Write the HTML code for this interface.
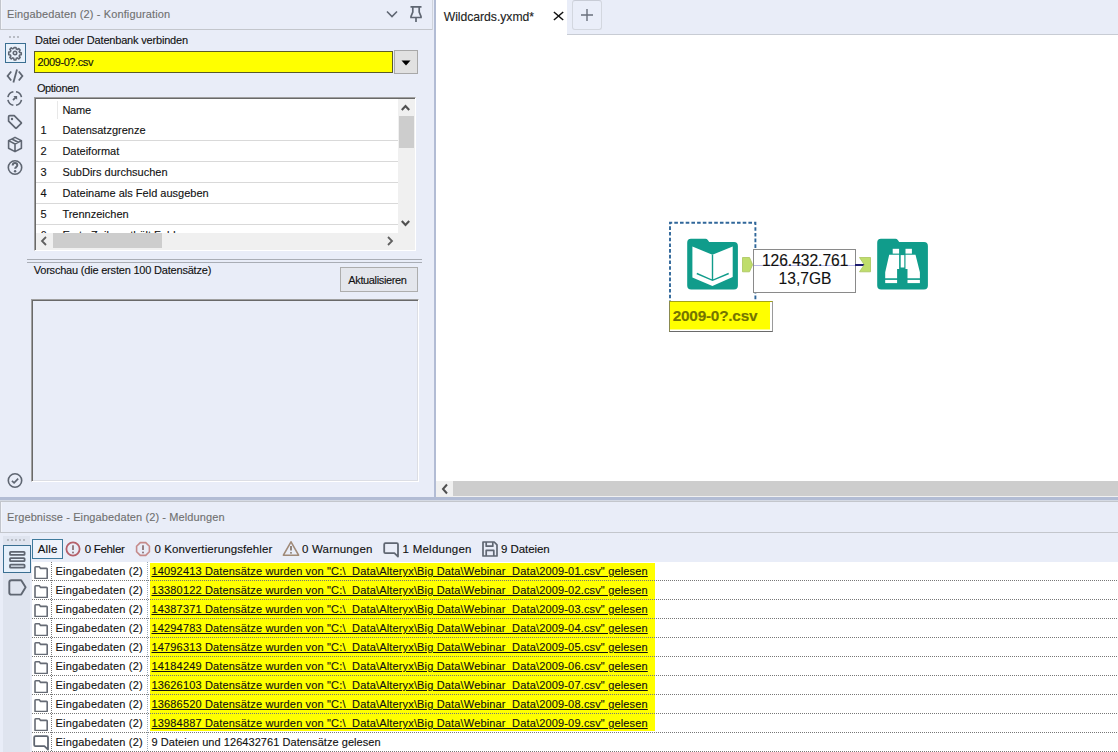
<!DOCTYPE html>
<html><head><meta charset="utf-8">
<style>
*{margin:0;padding:0;box-sizing:border-box}
html,body{width:1118px;height:752px;overflow:hidden;background:#e9edf8;font-family:"Liberation Sans",sans-serif;position:relative}
.a{position:absolute}
.t{position:absolute;white-space:pre;line-height:1;-webkit-text-stroke:0.12px currentColor}
</style></head><body>
<div class="a" style="left:0px;top:0px;width:434px;height:497px;background:#e9edf8;"></div>
<div class="a" style="left:0px;top:0px;width:1px;height:29px;background:#c2c5cc;"></div>
<div class="a" style="left:1px;top:0px;width:1px;height:29px;background:#f2f4fa;"></div>
<div class="a" style="left:0px;top:29px;width:433px;height:1px;background:#c3c6cc;"></div>
<div class="a" style="left:432px;top:0px;width:1px;height:30px;background:#d0d4dc;"></div>
<div class="t" style="left:7.00px;top:9.19px;font-size:11px;color:#707070;letter-spacing:0.133px;">Eingabedaten&#32;(2)&#32;-&#32;Konfiguration</div>
<svg class="a" style="left:385px;top:9px" width="14" height="10" viewBox="0 0 14 10"><path d="M2 2.5 L7 7.5 L12 2.5" fill="none" stroke="#5f6672" stroke-width="1.6"/></svg>
<svg class="a" style="left:408px;top:4px" width="16" height="20" viewBox="0 0 16 20"><path d="M2.5 2.8 H13.5 M4.8 3 V8 L3 12.5 V13.5 H13 V12.5 L11.2 8 V3 M8 13.5 V18" fill="none" stroke="#5f6672" stroke-width="1.7"/></svg>
<div class="a" style="left:9px;top:36px;width:2px;height:2px;background:#b8bcc4;"></div>
<div class="a" style="left:13px;top:36px;width:2px;height:2px;background:#b8bcc4;"></div>
<div class="a" style="left:17px;top:36px;width:2px;height:2px;background:#b8bcc4;"></div>
<div class="a" style="left:5px;top:43px;width:21px;height:20px;border:1.3px solid #3a6f92;background:#e8f1fb"></div>
<svg class="a" style="left:7px;top:45px" width="16" height="16" viewBox="0 0 16 16"><g fill="none" stroke="#5f6672" stroke-width="1.8" stroke-linejoin="round" transform="translate(8 8) scale(0.87) translate(-8 -8)"><path d="M6.9 1.6h2.2l.4 1.9 1.2.5 1.6-1.1 1.6 1.6-1.1 1.6.5 1.2 1.9.4v2.2l-1.9.4-.5 1.2 1.1 1.6-1.6 1.6-1.6-1.1-1.2.5-.4 1.9H6.9l-.4-1.9-1.2-.5-1.6 1.1-1.6-1.6 1.1-1.6-.5-1.2-1.9-.4V6.9l1.9-.4.5-1.2-1.1-1.6 1.6-1.6 1.6 1.1 1.2-.5z"/><circle cx="8" cy="8" r="2"/></g></svg>
<svg class="a" style="left:6px;top:68px" width="18" height="16" viewBox="0 0 18 16"><g fill="none" stroke="#5f6672" stroke-width="1.8"><path d="M5.2 3.5 L1.6 8 L5.2 12.5 M12.8 3.5 L16.4 8 L12.8 12.5 M11 1.5 L7.4 14.5"/></g></svg>
<svg class="a" style="left:7px;top:91px" width="16" height="16" viewBox="0 0 16 16"><g fill="none" stroke="#5f6672" stroke-width="1.6"><path d="M14.47 8.82 A6.9 6.9 0 0 1 9.02 14.27 M6.38 14.27 A6.9 6.9 0 0 1 0.93 8.82 M0.93 6.18 A6.9 6.9 0 0 1 6.38 0.73 M9.02 0.73 A6.9 6.9 0 0 1 14.47 6.18"/><path d="M6 9.1 L9.2 5.9" stroke-width="1.8"/></g><path d="M6.4 5 H10.1 V8.7 Z" fill="#5f6672"/></svg>
<svg class="a" style="left:7px;top:114px" width="16" height="16" viewBox="0 0 16 16"><g fill="none" stroke="#5f6672" stroke-width="1.7" stroke-linejoin="round"><path d="M2.8 1.6 H7.2 L14.2 8.6 Q14.6 9 14.2 9.4 L9.4 14.2 Q9 14.6 8.6 14.2 L1.6 7.2 V2.8 Q1.6 1.6 2.8 1.6 Z"/></g><circle cx="5" cy="5" r="1.2" fill="#5f6672"/></svg>
<svg class="a" style="left:7px;top:136px" width="16" height="17" viewBox="0 0 16 17"><g fill="none" stroke="#5f6672" stroke-width="1.6" stroke-linejoin="round"><path d="M8 1.4 L14.4 4.6 V12.2 L8 15.6 L1.6 12.2 V4.6 Z M1.6 4.6 L8 8 L14.4 4.6 M8 8 V15.6 M4.8 3 L11.2 6.3"/></g></svg>
<svg class="a" style="left:7px;top:159px" width="16" height="17" viewBox="0 0 16 17"><g fill="none" stroke="#5f6672" stroke-width="1.6"><circle cx="8" cy="8.5" r="6.7"/><path d="M5.7 6.5 C5.7 4.8 6.8 4.1 8 4.1 C9.3 4.1 10.3 4.9 10.3 6.2 C10.3 7.8 8.1 8 8.1 9.8" stroke-width="2"/></g><circle cx="8.1" cy="12.3" r="1.2" fill="#5f6672"/></svg>
<svg class="a" style="left:7px;top:472px" width="16" height="17" viewBox="0 0 16 17"><g fill="none" stroke="#5f6672" stroke-width="1.6"><circle cx="8" cy="8.5" r="6.7"/><path d="M4.9 8.8 L7.1 10.9 L11.2 6.6"/></g></svg>
<div class="t" style="left:35.00px;top:35.19px;font-size:11px;color:#111;letter-spacing:-0.182px;">Datei&#32;oder&#32;Datenbank&#32;verbinden</div>
<div class="a" style="left:34px;top:51px;width:359px;height:22px;background:#ffff00;border:1px solid #5a5a28"></div>
<div class="t" style="left:37.60px;top:56.59px;font-size:11px;color:#111;letter-spacing:-0.413px;">2009-0?.csv</div>
<div class="a" style="left:394px;top:50px;width:24px;height:24px;background:#e1e1e1;border:1px solid #a8a8a8"></div>
<svg class="a" style="left:400px;top:59px" width="12" height="8" viewBox="0 0 12 8"><path d="M1.5 1.5 H10.5 L6 6.5 Z" fill="#000"/></svg>
<div class="t" style="left:36.90px;top:83.19px;font-size:11px;color:#111;letter-spacing:-0.361px;">Optionen</div>
<div class="a" style="left:34px;top:97px;width:382px;height:154px;background:#fff;border-top:1px solid #a0a0a0;border-left:1px solid #a0a0a0;border-right:1px solid #fff;border-bottom:1px solid #fff;box-shadow:inset 1px 1px 0 #696969,inset -1px -1px 0 #e3e3e3"></div>
<div class="a" style="left:57px;top:101px;width:1px;height:18px;background:#e8e8e8;"></div>
<div class="t" style="left:62.40px;top:105.39px;font-size:11px;color:#111;letter-spacing:-0.242px;">Name</div>
<div class="t" style="left:40.60px;top:125.29px;font-size:11px;color:#111;">1</div>
<div class="t" style="left:62.40px;top:125.29px;font-size:11px;color:#111;">Datensatzgrenze</div>
<div class="a" style="left:36px;top:140px;width:362px;height:1px;background:#d9d9d9;"></div>
<div class="t" style="left:40.60px;top:146.29px;font-size:11px;color:#111;">2</div>
<div class="t" style="left:62.40px;top:146.29px;font-size:11px;color:#111;">Dateiformat</div>
<div class="a" style="left:36px;top:161px;width:362px;height:1px;background:#d9d9d9;"></div>
<div class="t" style="left:40.60px;top:167.29px;font-size:11px;color:#111;">3</div>
<div class="t" style="left:62.40px;top:167.29px;font-size:11px;color:#111;">SubDirs&#32;durchsuchen</div>
<div class="a" style="left:36px;top:182px;width:362px;height:1px;background:#d9d9d9;"></div>
<div class="t" style="left:40.60px;top:188.29px;font-size:11px;color:#111;">4</div>
<div class="t" style="left:62.40px;top:188.29px;font-size:11px;color:#111;letter-spacing:0.007px;">Dateiname&#32;als&#32;Feld&#32;ausgeben</div>
<div class="a" style="left:36px;top:203px;width:362px;height:1px;background:#d9d9d9;"></div>
<div class="t" style="left:40.60px;top:209.29px;font-size:11px;color:#111;">5</div>
<div class="t" style="left:62.40px;top:209.29px;font-size:11px;color:#111;">Trennzeichen</div>
<div class="a" style="left:36px;top:224px;width:362px;height:1px;background:#d9d9d9;"></div>
<div class="a" style="left:36px;top:225px;width:362px;height:8px;overflow:hidden">
<div class="t" style="left:4.60px;top:5.29px;font-size:11px;color:#111;">6</div>
<div class="t" style="left:26.40px;top:5.29px;font-size:11px;color:#111;">Erste&#32;Zeile&#32;enthält&#32;Feldnamen</div>
</div>
<div class="a" style="left:398px;top:99px;width:17px;height:151px;background:#f0f0f0;"></div>
<div class="a" style="left:399px;top:116px;width:15px;height:32px;background:#cdcdcd;"></div>
<svg class="a" style="left:400px;top:103px" width="11" height="9" viewBox="0 0 11 9"><path d="M1.8 7 L5.5 3 L9.2 7" fill="none" stroke="#505050" stroke-width="2.1"/></svg>
<svg class="a" style="left:400px;top:219px" width="11" height="9" viewBox="0 0 11 9"><path d="M1.8 2 L5.5 6 L9.2 2" fill="none" stroke="#505050" stroke-width="2.1"/></svg>
<div class="a" style="left:36px;top:233px;width:362px;height:17px;background:#f0f0f0;"></div>
<div class="a" style="left:53px;top:233px;width:109px;height:15px;background:#cdcdcd;"></div>
<svg class="a" style="left:40px;top:236px" width="8" height="10" viewBox="0 0 8 10"><path d="M6 1 L2 5 L6 9" fill="none" stroke="#606060" stroke-width="1.8"/></svg>
<svg class="a" style="left:386px;top:236px" width="8" height="10" viewBox="0 0 8 10"><path d="M2 1 L6 5 L2 9" fill="none" stroke="#606060" stroke-width="1.8"/></svg>
<div class="a" style="left:27px;top:259px;width:395px;height:1px;background:#a9adb5;"></div>
<div class="a" style="left:27px;top:262px;width:395px;height:1px;background:#a9adb5;"></div>
<div class="t" style="left:33.70px;top:264.99px;font-size:11px;color:#111;letter-spacing:-0.200px;">Vorschau&#32;(die&#32;ersten&#32;100&#32;Datensätze)</div>
<div class="a" style="left:340px;top:267px;width:78px;height:25px;background:#e4e6ec;border:1px solid #adadad"></div>
<div class="t" style="left:348.30px;top:275.29px;font-size:11px;color:#111;letter-spacing:-0.363px;">Aktualisieren</div>
<div class="a" style="left:31px;top:299px;width:388px;height:183px;background:#e9edf8;border-top:1px solid #a0a0a0;border-left:1px solid #a0a0a0;border-right:1px solid #fff;border-bottom:1px solid #fff;box-shadow:inset 1px 1px 0 #696969,inset -1px -1px 0 #dcdee4"></div>
<div class="a" style="left:434px;top:0px;width:2px;height:497px;background:#b2bcd4;"></div>
<div class="a" style="left:436px;top:0px;width:682px;height:481px;background:#fff;"></div>
<div class="a" style="left:567px;top:0;width:551px;height:35px;background:#e9edf8;border-bottom:1px solid #c8ccd4"></div>
<div class="t" style="left:443.70px;top:10.57px;font-size:12.2px;color:#222;letter-spacing:-0.029px;">Wildcards.yxmd*</div>
<svg class="a" style="left:552px;top:10px" width="13" height="12" viewBox="0 0 13 12"><path d="M1.9 2 L11.2 10 M11.2 2 L1.9 10" stroke="#111" stroke-width="1.5"/></svg>
<div class="a" style="left:572px;top:0px;width:30px;height:30px;background:#eaeef9;border:1px solid #d3d7df;border-top-color:#c8ccd6;border-radius:3px"></div>
<svg class="a" style="left:580px;top:8px" width="14" height="14" viewBox="0 0 14 14"><path d="M7 1 V13 M1 7 H13" stroke="#6a707c" stroke-width="1.4"/></svg>
<svg class="a" style="left:668px;top:220px" width="92" height="84" viewBox="0 0 92 84"><path d="M2 84 V2.8 H87.4 V84" fill="none" stroke="#30679a" stroke-width="1.9" stroke-dasharray="3.6 2.1"/></svg>
<svg class="a" style="left:682px;top:234px" width="60" height="60" viewBox="0 0 60 60"><path d="M9 4.8 H23.5 Q24.8 4.8 25.8 6 L27.2 8 H52 Q55.9 8 55.9 12 V51.5 Q55.9 55.5 52 55.5 H9.2 Q5.2 55.5 5.2 51.5 V8.8 Q5.2 4.8 9 4.8 Z" fill="#109c8b"/><path d="M10.4 12.4 L30.4 20.7 L50.7 12.4 V43.1 L30.4 51.9 L10.4 43.5 Z" fill="#fff"/><path d="M30.5 20.7 V46.3 M14.8 39.5 L30.5 46.3 L46.7 39.5" fill="none" stroke="#109c8b" stroke-width="1.4"/></svg>
<svg class="a" style="left:872px;top:234px" width="60" height="60" viewBox="0 0 60 60"><path d="M9 4.8 H23.5 Q24.8 4.8 25.8 6 L27.2 8 H52 Q55.9 8 55.9 12 V51.5 Q55.9 55.5 52 55.5 H9.2 Q5.2 55.5 5.2 51.5 V8.8 Q5.2 4.8 9 4.8 Z" fill="#109c8b"/><g fill="#fff"><rect x="20.7" y="14.8" width="6.4" height="4.8"/><rect x="33.5" y="14.8" width="6.4" height="4.8"/><rect x="28.7" y="21.1" width="3.6" height="12.4"/><path d="M17.2 20.7 H27.1 V35.1 H25.1 V44.3 H13.2 V38.3 Z"/><path d="M43.5 20.7 H33.5 V35.1 H35.5 V44.3 H47.9 V38.3 Z"/><rect x="13.2" y="45.9" width="11.9" height="3.2"/><rect x="35.5" y="45.9" width="12.4" height="3.2"/></g></svg>
<svg class="a" style="left:740px;top:255px" width="16" height="20" viewBox="0 0 16 20"><path d="M2.5 2.5 H9.5 L12.6 9.7 L9.5 16.8 H2.5 Z" fill="#bfdd6c" stroke="#a9c45c" stroke-width="0.8"/></svg>
<div class="a" style="left:753px;top:249px;width:103px;height:44px;background:#fff;border:1.5px solid #8a8a8a"></div>
<div class="a" style="left:754px;top:265px;width:101px;height:1px;background:#b8b8e6;"></div>
<div class="a" style="left:855px;top:264px;width:10px;height:2px;background:#1b1b70;"></div>
<div class="t" style="left:761.90px;top:252.59px;font-size:15.6px;color:#111;letter-spacing:-0.024px;">126.432.761</div>
<div class="t" style="left:778.50px;top:270.59px;font-size:15.6px;color:#111;letter-spacing:0.024px;">13,7GB</div>
<svg class="a" style="left:857px;top:255px" width="16" height="20" viewBox="0 0 16 20"><path d="M2.5 2.5 H13.5 V16.8 H2.5 L7.3 9.7 Z" fill="#bfdd6c" stroke="#a9c45c" stroke-width="0.8"/></svg>
<div class="a" style="left:669px;top:301px;width:104px;height:31px;background:#ffff00;border-top:1.5px solid #a4a414;border-left:1px solid #8a8a50;border-bottom:1.5px solid #6a6a6a;border-right:1px solid #9a9a9a;box-shadow:inset -2px -1.5px 0 #fff"></div>
<div class="t" style="left:672.70px;top:308.46px;font-size:15.4px;color:#747400;letter-spacing:-0.242px;font-weight:bold;">2009-0?.csv</div>
<div class="a" style="left:436px;top:481px;width:682px;height:16px;background:#f0f0f0;"></div>
<div class="a" style="left:453px;top:481px;width:665px;height:15px;background:#cdcdcd;"></div>
<svg class="a" style="left:440px;top:483px" width="10" height="12" viewBox="0 0 10 12"><path d="M7 1.5 L3 6 L7 10.5" fill="none" stroke="#505050" stroke-width="2"/></svg>
<div class="a" style="left:0px;top:497px;width:1118px;height:3px;background:#b2bcd4;"></div>
<div class="a" style="left:0px;top:500px;width:1118px;height:1px;background:#d5dae4;"></div>
<div class="a" style="left:0px;top:501px;width:1118px;height:1px;background:#c3c6cc;"></div>
<div class="a" style="left:0px;top:502px;width:1118px;height:250px;background:#e9edf8;"></div>
<div class="a" style="left:0px;top:502px;width:1px;height:30px;background:#c2c5cc;"></div>
<div class="a" style="left:1px;top:502px;width:1px;height:30px;background:#f2f4fa;"></div>
<div class="a" style="left:0px;top:532px;width:1118px;height:1px;background:#c3c6cc;"></div>
<div class="t" style="left:7.00px;top:512.19px;font-size:11px;color:#707070;letter-spacing:0.103px;">Ergebnisse&#32;-&#32;Eingabedaten&#32;(2)&#32;-&#32;Meldungen</div>
<div class="a" style="left:3px;top:536px;width:27px;height:216px;background:#dfe4ef;"></div>
<div class="a" style="left:7px;top:539px;width:2px;height:2px;background:#b8bcc4;"></div>
<div class="a" style="left:11px;top:539px;width:2px;height:2px;background:#b8bcc4;"></div>
<div class="a" style="left:15px;top:539px;width:2px;height:2px;background:#b8bcc4;"></div>
<div class="a" style="left:19px;top:539px;width:2px;height:2px;background:#b8bcc4;"></div>
<div class="a" style="left:23px;top:539px;width:2px;height:2px;background:#b8bcc4;"></div>
<div class="a" style="left:3px;top:545px;width:28px;height:28px;border:1.3px solid #3a6f92;background:#e6f0fb"></div>
<svg class="a" style="left:8px;top:550px" width="18" height="19" viewBox="0 0 18 19"><g fill="none" stroke="#5f6672" stroke-width="1.8"><rect x="2" y="1.9" width="14.6" height="3" rx="0.7"/><rect x="2" y="8.1" width="14.6" height="3" rx="0.7"/><rect x="2" y="14.7" width="14.6" height="3" rx="0.7"/></g></svg>
<svg class="a" style="left:7px;top:577px" width="21" height="20" viewBox="0 0 21 20"><path d="M4.5 3.2 H14.2 L18.6 10.3 L14.2 17.6 H4.5 Q2.3 17.6 2.3 15.4 V5.4 Q2.3 3.2 4.5 3.2 Z" fill="none" stroke="#5f6672" stroke-width="1.9" stroke-linejoin="round"/></svg>
<div class="a" style="left:32px;top:539px;width:31px;height:20px;border:1.5px solid #3f7a9c;background:#eef3fb"></div>
<div class="t" style="left:37.80px;top:543.77px;font-size:11.5px;color:#111;letter-spacing:0.107px;">Alle</div>
<svg class="a" style="left:65px;top:541px" width="16" height="16" viewBox="0 0 16 16"><circle cx="8" cy="8" r="6.6" fill="none" stroke="#b5606a" stroke-width="1.8"/><path d="M8 4.2 V9" stroke="#8c7377" stroke-width="1.8"/><circle cx="8" cy="11.5" r="1" fill="#8c7377"/></svg>
<div class="t" style="left:84.70px;top:543.77px;font-size:11.5px;color:#111;letter-spacing:-0.294px;">0&#32;Fehler</div>
<svg class="a" style="left:135px;top:541px" width="16" height="16" viewBox="0 0 16 16"><path d="M5.3 1.6 H10.7 L14.4 5.3 V10.7 L10.7 14.4 H5.3 L1.6 10.7 V5.3 Z" fill="none" stroke="#c58a8a" stroke-width="1.6"/><path d="M8 4.2 V9" stroke="#8c7377" stroke-width="1.8"/><circle cx="8" cy="11.5" r="1" fill="#8c7377"/></svg>
<div class="t" style="left:154.50px;top:543.77px;font-size:11.5px;color:#111;letter-spacing:0.101px;">0&#32;Konvertierungsfehler</div>
<svg class="a" style="left:282px;top:540px" width="18" height="17" viewBox="0 0 18 17"><path d="M9 1.8 L16.6 15.2 H1.4 Z" fill="none" stroke="#a08a78" stroke-width="1.6" stroke-linejoin="round"/><path d="M9 6 V10.6" stroke="#7a6a5c" stroke-width="1.6"/><circle cx="9" cy="12.8" r="0.9" fill="#7a6a5c"/></svg>
<div class="t" style="left:302.00px;top:543.77px;font-size:11.5px;color:#111;letter-spacing:0.178px;">0&#32;Warnungen</div>
<svg class="a" style="left:382px;top:541px" width="18" height="17" viewBox="0 0 18 17"><path d="M3.4 2.2 H14.8 Q16 2.2 16 3.4 V15.6 L12.4 12.2 H3.4 Q2.2 12.2 2.2 11 V3.4 Q2.2 2.2 3.4 2.2 Z" fill="none" stroke="#5f6672" stroke-width="1.8" stroke-linejoin="round"/></svg>
<div class="t" style="left:402.60px;top:543.77px;font-size:11.5px;color:#111;letter-spacing:0.240px;">1&#32;Meldungen</div>
<svg class="a" style="left:481px;top:540px" width="18" height="18" viewBox="0 0 18 18"><g fill="none" stroke="#5f6672" stroke-width="1.7" stroke-linejoin="round"><path d="M2 2 H13.2 L16 4.8 V16 H2 Z M5.2 2 V6.2 H11.8 V2 M5.2 16 V10.4 H12.8 V16"/></g></svg>
<div class="t" style="left:501.00px;top:543.77px;font-size:11.5px;color:#111;letter-spacing:-0.067px;">9&#32;Dateien</div>
<div class="a" style="left:32px;top:562px;width:1086px;height:190px;background:#fff;"></div>
<div class="a" style="left:150px;top:563px;width:505px;height:168px;background:#ffff00;"></div>
<svg class="a" style="left:33px;top:564px" width="16" height="15" viewBox="0 0 16 15"><path d="M2.7 2.8 H6.3 L7.6 4.4 H13.5 Q14.2 4.4 14.2 5.1 V13.9 Q14.2 14.6 13.5 14.6 H2.7 Q2 14.6 2 13.9 V3.5 Q2 2.8 2.7 2.8 Z" fill="none" stroke="#666b75" stroke-width="1.6" stroke-linejoin="round"/></svg>
<div class="t" style="left:151.50px;top:566.39px;font-size:11px;color:#111;letter-spacing:0.159px;text-decoration:underline;">14092413&#32;Datensätze&#32;wurden&#32;von&#32;&quot;C:\&#32;&#32;Data\Alteryx\Big&#32;Data\Webinar&#32;&#32;Data\2009-01.csv&quot;&#32;gelesen</div>
<div class="t" style="left:55.60px;top:566.39px;font-size:11px;color:#111;letter-spacing:0.178px;">Eingabedaten&#32;(2)</div>
<div class="a" style="left:32px;top:580px;width:1086px;height:1px;background:transparent;background-image:linear-gradient(to right,#777 50%,transparent 50%);background-size:2px 1px"></div>
<svg class="a" style="left:33px;top:583px" width="16" height="15" viewBox="0 0 16 15"><path d="M2.7 2.8 H6.3 L7.6 4.4 H13.5 Q14.2 4.4 14.2 5.1 V13.9 Q14.2 14.6 13.5 14.6 H2.7 Q2 14.6 2 13.9 V3.5 Q2 2.8 2.7 2.8 Z" fill="none" stroke="#666b75" stroke-width="1.6" stroke-linejoin="round"/></svg>
<div class="t" style="left:151.50px;top:585.39px;font-size:11px;color:#111;letter-spacing:0.159px;text-decoration:underline;">13380122&#32;Datensätze&#32;wurden&#32;von&#32;&quot;C:\&#32;&#32;Data\Alteryx\Big&#32;Data\Webinar&#32;&#32;Data\2009-02.csv&quot;&#32;gelesen</div>
<div class="t" style="left:55.60px;top:585.39px;font-size:11px;color:#111;letter-spacing:0.178px;">Eingabedaten&#32;(2)</div>
<div class="a" style="left:32px;top:599px;width:1086px;height:1px;background:transparent;background-image:linear-gradient(to right,#777 50%,transparent 50%);background-size:2px 1px"></div>
<svg class="a" style="left:33px;top:602px" width="16" height="15" viewBox="0 0 16 15"><path d="M2.7 2.8 H6.3 L7.6 4.4 H13.5 Q14.2 4.4 14.2 5.1 V13.9 Q14.2 14.6 13.5 14.6 H2.7 Q2 14.6 2 13.9 V3.5 Q2 2.8 2.7 2.8 Z" fill="none" stroke="#666b75" stroke-width="1.6" stroke-linejoin="round"/></svg>
<div class="t" style="left:151.50px;top:604.39px;font-size:11px;color:#111;letter-spacing:0.159px;text-decoration:underline;">14387371&#32;Datensätze&#32;wurden&#32;von&#32;&quot;C:\&#32;&#32;Data\Alteryx\Big&#32;Data\Webinar&#32;&#32;Data\2009-03.csv&quot;&#32;gelesen</div>
<div class="t" style="left:55.60px;top:604.39px;font-size:11px;color:#111;letter-spacing:0.178px;">Eingabedaten&#32;(2)</div>
<div class="a" style="left:32px;top:618px;width:1086px;height:1px;background:transparent;background-image:linear-gradient(to right,#777 50%,transparent 50%);background-size:2px 1px"></div>
<svg class="a" style="left:33px;top:621px" width="16" height="15" viewBox="0 0 16 15"><path d="M2.7 2.8 H6.3 L7.6 4.4 H13.5 Q14.2 4.4 14.2 5.1 V13.9 Q14.2 14.6 13.5 14.6 H2.7 Q2 14.6 2 13.9 V3.5 Q2 2.8 2.7 2.8 Z" fill="none" stroke="#666b75" stroke-width="1.6" stroke-linejoin="round"/></svg>
<div class="t" style="left:151.50px;top:623.39px;font-size:11px;color:#111;letter-spacing:0.159px;text-decoration:underline;">14294783&#32;Datensätze&#32;wurden&#32;von&#32;&quot;C:\&#32;&#32;Data\Alteryx\Big&#32;Data\Webinar&#32;&#32;Data\2009-04.csv&quot;&#32;gelesen</div>
<div class="t" style="left:55.60px;top:623.39px;font-size:11px;color:#111;letter-spacing:0.178px;">Eingabedaten&#32;(2)</div>
<div class="a" style="left:32px;top:637px;width:1086px;height:1px;background:transparent;background-image:linear-gradient(to right,#777 50%,transparent 50%);background-size:2px 1px"></div>
<svg class="a" style="left:33px;top:640px" width="16" height="15" viewBox="0 0 16 15"><path d="M2.7 2.8 H6.3 L7.6 4.4 H13.5 Q14.2 4.4 14.2 5.1 V13.9 Q14.2 14.6 13.5 14.6 H2.7 Q2 14.6 2 13.9 V3.5 Q2 2.8 2.7 2.8 Z" fill="none" stroke="#666b75" stroke-width="1.6" stroke-linejoin="round"/></svg>
<div class="t" style="left:151.50px;top:642.39px;font-size:11px;color:#111;letter-spacing:0.159px;text-decoration:underline;">14796313&#32;Datensätze&#32;wurden&#32;von&#32;&quot;C:\&#32;&#32;Data\Alteryx\Big&#32;Data\Webinar&#32;&#32;Data\2009-05.csv&quot;&#32;gelesen</div>
<div class="t" style="left:55.60px;top:642.39px;font-size:11px;color:#111;letter-spacing:0.178px;">Eingabedaten&#32;(2)</div>
<div class="a" style="left:32px;top:656px;width:1086px;height:1px;background:transparent;background-image:linear-gradient(to right,#777 50%,transparent 50%);background-size:2px 1px"></div>
<svg class="a" style="left:33px;top:659px" width="16" height="15" viewBox="0 0 16 15"><path d="M2.7 2.8 H6.3 L7.6 4.4 H13.5 Q14.2 4.4 14.2 5.1 V13.9 Q14.2 14.6 13.5 14.6 H2.7 Q2 14.6 2 13.9 V3.5 Q2 2.8 2.7 2.8 Z" fill="none" stroke="#666b75" stroke-width="1.6" stroke-linejoin="round"/></svg>
<div class="t" style="left:151.50px;top:661.39px;font-size:11px;color:#111;letter-spacing:0.159px;text-decoration:underline;">14184249&#32;Datensätze&#32;wurden&#32;von&#32;&quot;C:\&#32;&#32;Data\Alteryx\Big&#32;Data\Webinar&#32;&#32;Data\2009-06.csv&quot;&#32;gelesen</div>
<div class="t" style="left:55.60px;top:661.39px;font-size:11px;color:#111;letter-spacing:0.178px;">Eingabedaten&#32;(2)</div>
<div class="a" style="left:32px;top:675px;width:1086px;height:1px;background:transparent;background-image:linear-gradient(to right,#777 50%,transparent 50%);background-size:2px 1px"></div>
<svg class="a" style="left:33px;top:678px" width="16" height="15" viewBox="0 0 16 15"><path d="M2.7 2.8 H6.3 L7.6 4.4 H13.5 Q14.2 4.4 14.2 5.1 V13.9 Q14.2 14.6 13.5 14.6 H2.7 Q2 14.6 2 13.9 V3.5 Q2 2.8 2.7 2.8 Z" fill="none" stroke="#666b75" stroke-width="1.6" stroke-linejoin="round"/></svg>
<div class="t" style="left:151.50px;top:680.39px;font-size:11px;color:#111;letter-spacing:0.159px;text-decoration:underline;">13626103&#32;Datensätze&#32;wurden&#32;von&#32;&quot;C:\&#32;&#32;Data\Alteryx\Big&#32;Data\Webinar&#32;&#32;Data\2009-07.csv&quot;&#32;gelesen</div>
<div class="t" style="left:55.60px;top:680.39px;font-size:11px;color:#111;letter-spacing:0.178px;">Eingabedaten&#32;(2)</div>
<div class="a" style="left:32px;top:694px;width:1086px;height:1px;background:transparent;background-image:linear-gradient(to right,#777 50%,transparent 50%);background-size:2px 1px"></div>
<svg class="a" style="left:33px;top:697px" width="16" height="15" viewBox="0 0 16 15"><path d="M2.7 2.8 H6.3 L7.6 4.4 H13.5 Q14.2 4.4 14.2 5.1 V13.9 Q14.2 14.6 13.5 14.6 H2.7 Q2 14.6 2 13.9 V3.5 Q2 2.8 2.7 2.8 Z" fill="none" stroke="#666b75" stroke-width="1.6" stroke-linejoin="round"/></svg>
<div class="t" style="left:151.50px;top:699.39px;font-size:11px;color:#111;letter-spacing:0.159px;text-decoration:underline;">13686520&#32;Datensätze&#32;wurden&#32;von&#32;&quot;C:\&#32;&#32;Data\Alteryx\Big&#32;Data\Webinar&#32;&#32;Data\2009-08.csv&quot;&#32;gelesen</div>
<div class="t" style="left:55.60px;top:699.39px;font-size:11px;color:#111;letter-spacing:0.178px;">Eingabedaten&#32;(2)</div>
<div class="a" style="left:32px;top:713px;width:1086px;height:1px;background:transparent;background-image:linear-gradient(to right,#777 50%,transparent 50%);background-size:2px 1px"></div>
<svg class="a" style="left:33px;top:716px" width="16" height="15" viewBox="0 0 16 15"><path d="M2.7 2.8 H6.3 L7.6 4.4 H13.5 Q14.2 4.4 14.2 5.1 V13.9 Q14.2 14.6 13.5 14.6 H2.7 Q2 14.6 2 13.9 V3.5 Q2 2.8 2.7 2.8 Z" fill="none" stroke="#666b75" stroke-width="1.6" stroke-linejoin="round"/></svg>
<div class="t" style="left:151.50px;top:718.39px;font-size:11px;color:#111;letter-spacing:0.159px;text-decoration:underline;">13984887&#32;Datensätze&#32;wurden&#32;von&#32;&quot;C:\&#32;&#32;Data\Alteryx\Big&#32;Data\Webinar&#32;&#32;Data\2009-09.csv&quot;&#32;gelesen</div>
<div class="t" style="left:55.60px;top:718.39px;font-size:11px;color:#111;letter-spacing:0.178px;">Eingabedaten&#32;(2)</div>
<div class="a" style="left:32px;top:732px;width:1086px;height:1px;background:transparent;background-image:linear-gradient(to right,#777 50%,transparent 50%);background-size:2px 1px"></div>
<svg class="a" style="left:32px;top:734px" width="18" height="17" viewBox="0 0 18 17"><path d="M3.4 2.2 H14.8 Q16 2.2 16 3.4 V15.6 L12.4 12.2 H3.4 Q2.2 12.2 2.2 11 V3.4 Q2.2 2.2 3.4 2.2 Z" fill="none" stroke="#5f6672" stroke-width="1.8" stroke-linejoin="round"/></svg>
<div class="t" style="left:151.50px;top:737.39px;font-size:11px;color:#111;letter-spacing:0.054px;">9&#32;Dateien&#32;und&#32;126432761&#32;Datensätze&#32;gelesen</div>
<div class="t" style="left:55.60px;top:737.39px;font-size:11px;color:#111;letter-spacing:0.178px;">Eingabedaten&#32;(2)</div>
<div class="a" style="left:32px;top:751px;width:1086px;height:1px;background:transparent;background-image:linear-gradient(to right,#777 50%,transparent 50%);background-size:2px 1px"></div>
<div class="a" style="left:51px;top:562px;width:1px;height:190px;background:transparent;background-image:linear-gradient(to bottom,#777 50%,transparent 50%);background-size:1px 2px"></div>
<div class="a" style="left:147px;top:562px;width:1px;height:190px;background:transparent;background-image:linear-gradient(to bottom,#9ab 50%,transparent 50%);background-size:1px 2px"></div>
</body></html>
